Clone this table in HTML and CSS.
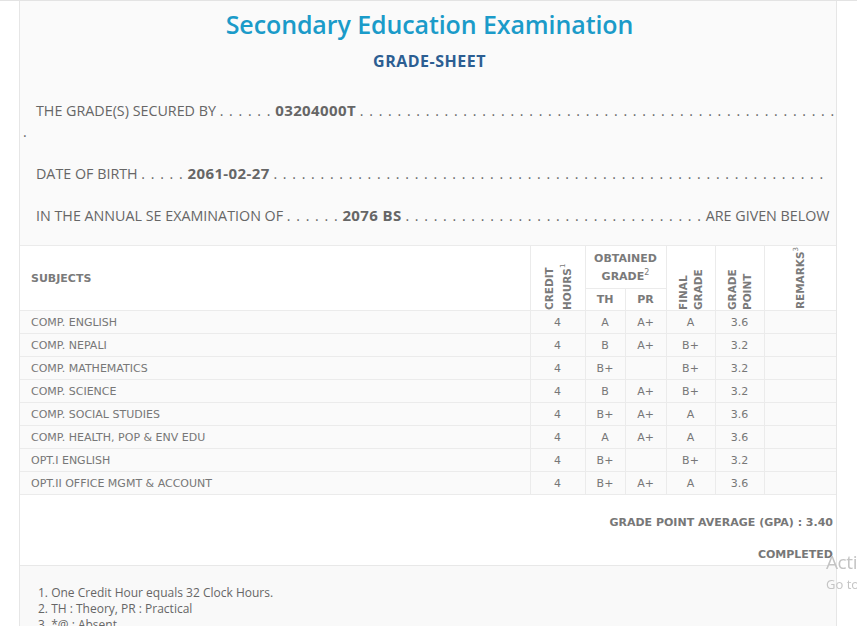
FILE: index.html
```html
<!DOCTYPE html>
<html lang="en">
<head>
<meta charset="utf-8">
<title>Grade Sheet</title>
<link rel="stylesheet" href="styles.css">
</head>
<body>
<div class="topline"></div>
<div class="sheet">
  <header class="intro">
    <h1 class="title">Secondary Education Examination</h1>
    <h2 class="subtitle">GRADE-SHEET</h2>
    <p class="line">THE GRADE(S) SECURED BY <span class="dots">. . . . . .</span> <b>03204000T</b> <span class="dots">. . . . . . . . . .
. . . . . . . . . .
. . . . . . . . . .
. . . . . . . . . .
. . . . . . . . . .
. .</span></p>
    <p class="line">DATE OF BIRTH <span class="dots">. . . . .</span> <b>2061-02-27</b> <span class="dots">. . . . . . . . . .
. . . . . . . . . .
. . . . . . . . . .
. . . . . . . . . .
. . . . . . . . . .
. . . . . . . . .</span></p>
    <p class="line">IN THE ANNUAL SE EXAMINATION OF <span class="dots">. . . . . .</span> <b>2076 BS</b> <span class="dots">. . . . . . . . . .
. . . . . . . . . .
. . . . . . . . . .
. .</span> ARE GIVEN BELOW</p>
  </header>

  <table class="grades">
    <colgroup>
      <col class="c-subj">
      <col class="c-credit">
      <col class="c-th">
      <col class="c-pr">
      <col class="c-final">
      <col class="c-point">
      <col class="c-rem">
    </colgroup>
    <thead>
      <tr class="h1">
        <th rowspan="2" class="subj-h">SUBJECTS</th>
        <th rowspan="2" class="vert"><span class="wide">CREDIT HOURS<sup>1</sup></span></th>
        <th colspan="2" class="obt">OBTAINED GRADE<sup>2</sup></th>
        <th rowspan="2" class="vert"><span>FINAL GRADE</span></th>
        <th rowspan="2" class="vert"><span>GRADE POINT</span></th>
        <th rowspan="2" class="vert"><span>REMARKS<sup>3</sup></span></th>
      </tr>
      <tr class="h2">
        <th>TH</th>
        <th>PR</th>
      </tr>
    </thead>
    <tbody>
      <tr><td>COMP. ENGLISH</td><td>4</td><td>A</td><td>A+</td><td>A</td><td>3.6</td><td></td></tr>
      <tr><td>COMP. NEPALI</td><td>4</td><td>B</td><td>A+</td><td>B+</td><td>3.2</td><td></td></tr>
      <tr><td>COMP. MATHEMATICS</td><td>4</td><td>B+</td><td></td><td>B+</td><td>3.2</td><td></td></tr>
      <tr><td>COMP. SCIENCE</td><td>4</td><td>B</td><td>A+</td><td>B+</td><td>3.2</td><td></td></tr>
      <tr><td>COMP. SOCIAL STUDIES</td><td>4</td><td>B+</td><td>A+</td><td>A</td><td>3.6</td><td></td></tr>
      <tr><td>COMP. HEALTH, POP &amp; ENV EDU</td><td>4</td><td>A</td><td>A+</td><td>A</td><td>3.6</td><td></td></tr>
      <tr><td>OPT.I ENGLISH</td><td>4</td><td>B+</td><td></td><td>B+</td><td>3.2</td><td></td></tr>
      <tr><td>OPT.II OFFICE MGMT &amp; ACCOUNT</td><td>4</td><td>B+</td><td>A+</td><td>A</td><td>3.6</td><td></td></tr>
    </tbody>
  </table>

  <div class="summary">
    <p class="gpa">GRADE POINT AVERAGE (GPA) : 3.40</p>
    <p class="status">COMPLETED</p>
  </div>

  <div class="notes">
    <ol>
      <li>One Credit Hour equals 32 Clock Hours.</li>
      <li>TH : Theory, PR : Practical</li>
      <li>*@ : Absent</li>
    </ol>
  </div>
</div>

<div class="watermark">
  <div class="wm-title">Activate Windows</div>
  <div class="wm-sub">Go to Settings to activate Windows.</div>
</div>
</body>
</html>
```

FILE: styles.css
```css
html {
  overflow: hidden;
}

body {
  margin: 0;
  background: #ffffff;
  font-family: "Open Sans", "Liberation Sans", sans-serif;
}

.topline {
  border-top: 1px solid #e3e3e3;
}

.sheet {
  margin-left: 19px;
  width: 816px;
  border-left: 1px solid #e6e6e6;
  border-right: 1px solid #e6e6e6;
  background: #fafafa;
}

/* ---------- intro ---------- */
.intro {
  padding: 5px 0 19px 3px;
}

.title {
  margin: 0;
  text-align: center;
  font-size: 25px;
  font-weight: 600;
  line-height: 36px;
  letter-spacing: -0.1px;
  color: #1b9bc9;
}

.subtitle {
  margin: 9px 0 0;
  text-align: center;
  font-size: 16px;
  font-weight: 700;
  line-height: 20px;
  letter-spacing: 0.5px;
  color: #2c5e92;
}

.line {
  margin: 21px 0 0;
  font-size: 14.3px;
  line-height: 21px;
  color: #666666;
  text-indent: 13px;
}

.subtitle + .line {
  margin-top: 29px;
}

.line b {
  font-size: 15px;
  font-weight: 700;
  letter-spacing: 0.4px;
  color: #666666;
}

.dots {
  font-size: 14px;
  letter-spacing: 1.05px;
}

/* ---------- table ---------- */
.grades {
  width: 100%;
  border-collapse: collapse;
  table-layout: fixed;
  font-family: "DejaVu Sans", "Liberation Sans", sans-serif;
  font-size: 11px;
  color: #777777;
}

.c-credit { width: 55px; }
.c-th { width: 40px; }
.c-pr { width: 41px; }
.c-final { width: 49px; }
.c-point { width: 49px; }
.c-rem { width: 72px; }

.grades th,
.grades td {
  border: 1px solid #ebebeb;
  padding: 0;
}

.grades tr > :first-child {
  border-left: 0;
}

.grades tr > :last-child {
  border-right: 0;
}

.grades thead {
  background: #ffffff;
}

.grades th {
  font-weight: 700;
  color: #7a7a7a;
  text-align: center;
  vertical-align: middle;
}

.grades .h1 th {
  height: 40px;
}

.grades .h2 th {
  height: 21px;
}

.grades .subj-h {
  text-align: left;
  padding-left: 11px;
}

.grades .obt {
  line-height: 18px;
  padding-top: 2px;
}

.grades sup {
  font-size: 8px;
  font-weight: 400;
  line-height: 0;
}

.grades .vert {
  line-height: 0;
}

.vert span {
  display: inline-block;
  vertical-align: middle;
  writing-mode: vertical-rl;
  transform: rotate(180deg);
  font-size: 10.5px;
  line-height: 15px;
  text-align: left;
}

.vert span.wide {
  line-height: 18px;
}

.vert sup {
  font-size: 7px;
}

.grades tbody td {
  height: 22px;
  text-align: center;
  background: #fafafa;
}

.grades tbody td:first-child {
  text-align: left;
  padding-left: 11px;
}

/* ---------- summary ---------- */
.summary {
  background: #ffffff;
  padding: 20px 3px 2px;
  border-bottom: 1px solid #e8e8e8;
  text-align: right;
  font-family: "DejaVu Sans", "Liberation Sans", sans-serif;
  font-size: 11px;
  font-weight: 700;
  color: #777777;
}

.summary p {
  margin: 0;
  line-height: 16px;
}

.summary .status {
  margin-top: 16px;
}

/* ---------- notes ---------- */
.notes {
  background: #f9f9f9;
  padding: 19px 0 20px;
}

.notes ol {
  margin: 0;
  padding-left: 18px;
  list-style-position: inside;
  font-size: 12px;
  line-height: 16px;
  color: #666666;
}

/* ---------- OS watermark overlay ---------- */
.watermark {
  position: fixed;
  left: 826px;
  right: 0;
  top: 549px;
  overflow: hidden;
  white-space: nowrap;
  color: #c4c4c4;
  font-family: "Open Sans", sans-serif;
}

.wm-title {
  font-size: 19px;
  line-height: 26px;
  letter-spacing: -0.4px;
}

.wm-sub {
  font-size: 13px;
  line-height: 18px;
}
```
